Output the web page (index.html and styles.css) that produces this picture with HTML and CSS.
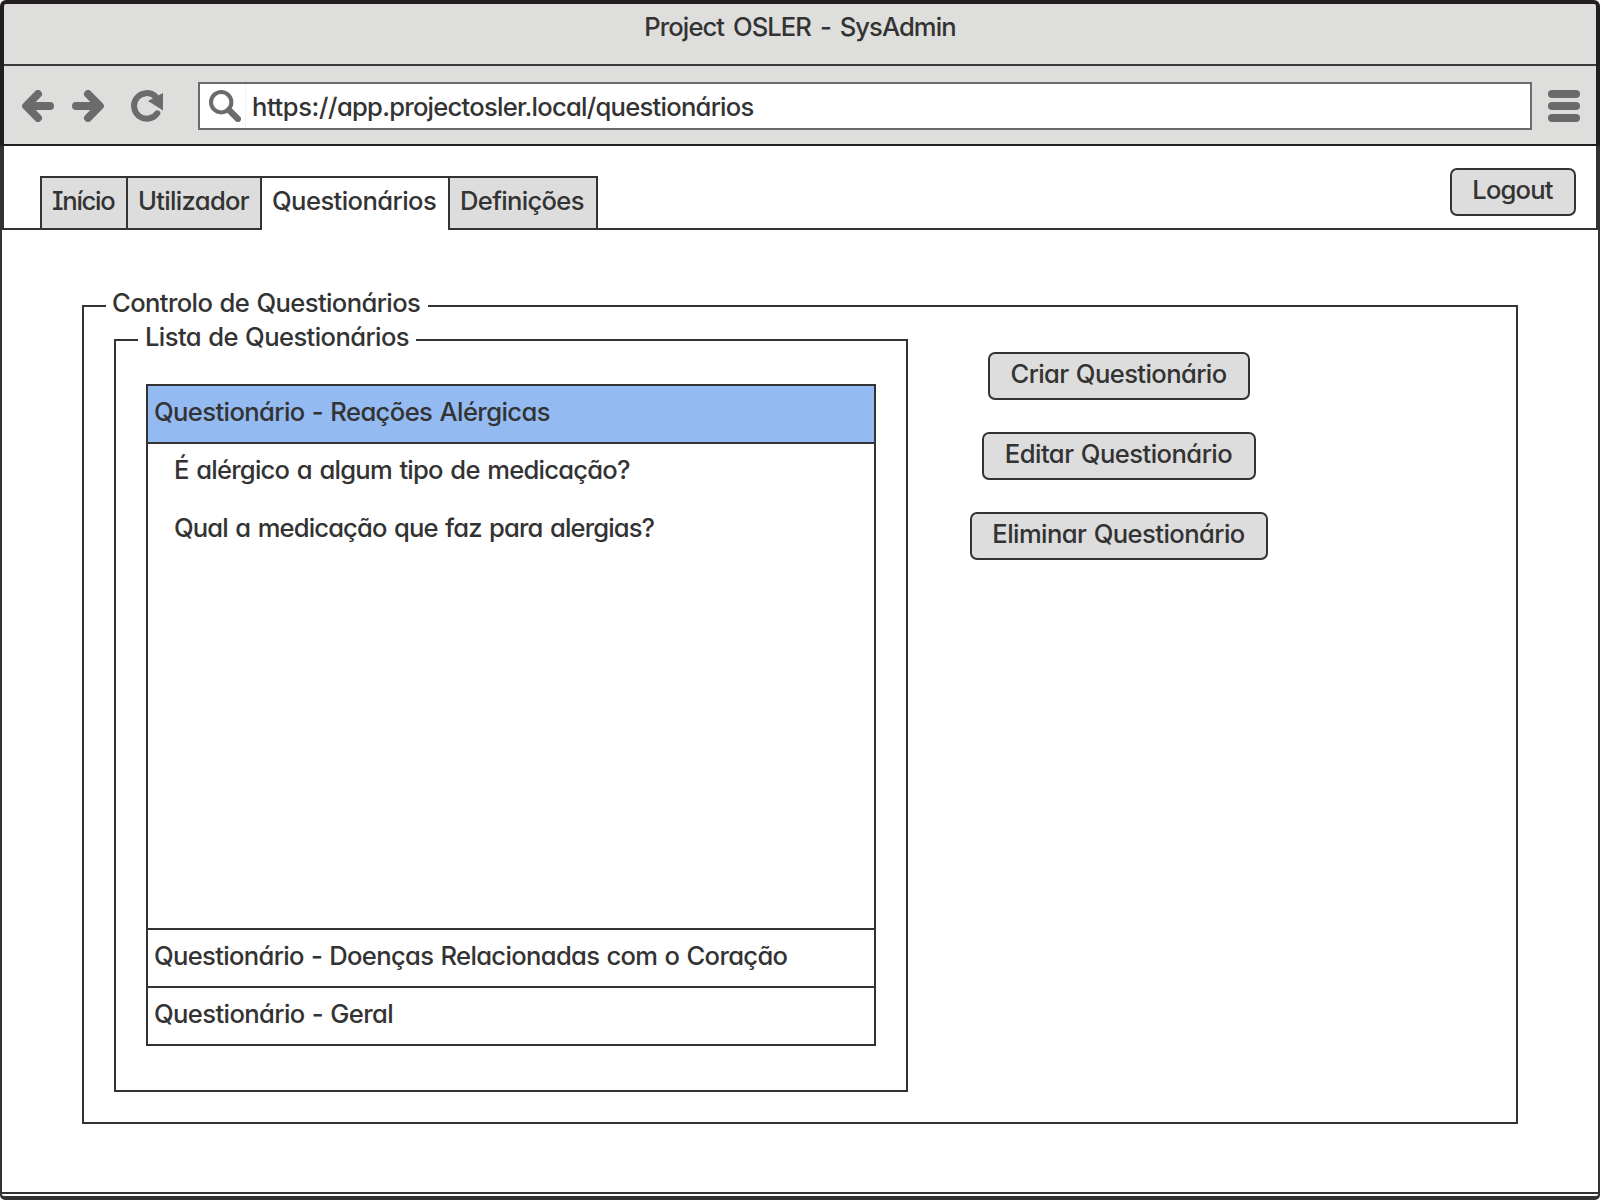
FILE: index.html
```
<!DOCTYPE html>
<html lang="pt">
<head>
<meta charset="utf-8">
<title>Project OSLER - SysAdmin</title>
<link rel="stylesheet" href="styles.css">
</head>
<body>
<div class="window">
  <header class="chrome">
    <div class="titlebar"><span>Project OSLER - SysAdmin</span></div>
    <div class="toolbar">
      <svg class="icon back" width="32" height="32" viewBox="0 0 32 32"><path d="M28 16H5M16 4L4.200 16L16 28" /></svg>
      <svg class="icon forward" width="32" height="32" viewBox="0 0 32 32"><path d="M4 16H27M16 4L27.800 16L16 28" /></svg>
      <svg class="icon reload" width="33" height="32" viewBox="0 0 33 32"><path class="arc" d="M26.300 23.300A12.800 12.800 0 1 1 24.500 6.500" /><path class="head" d="M32 3V20.500L17 11Z" /></svg>
      <div class="address">
        <div class="search"><svg class="icon" width="32" height="32" viewBox="0 0 32 32"><circle class="lens" cx="12.200" cy="12.200" r="10.200" /><path class="handle" d="M20 20L28.900 28.900" /></svg></div>
        <span><span class="scheme">https://</span>app.projectosler.local/questionários</span>
      </div>
      <svg class="menu" width="32" height="32" viewBox="0 0 32 32"><rect width="32" height="8" rx="4" /><rect y="12" width="32" height="8" rx="4" /><rect y="24" width="32" height="8" rx="4" /></svg>
    </div>
  </header>
  <nav class="nav">
    <div class="tabs">
      <a class="tab inicio"><span>Início</span></a>
      <a class="tab utilizador"><span>Utilizador</span></a>
      <a class="tab questionarios active"><span>Questionários</span></a>
      <a class="tab definicoes"><span>Definições</span></a>
    </div>
    <button class="btn logout"><span>Logout</span></button>
  </nav>
  <main class="content">
    <fieldset class="group control">
      <legend><span>Controlo de Questionários</span></legend>
      <div class="columns">
        <fieldset class="group list">
          <legend><span>Lista de Questionários</span></legend>
          <div class="accordion">
            <div class="row selected"><span>Questionário - Reações Alérgicas</span></div>
            <div class="panel">
              <div class="item first"><span>É alérgico a algum tipo de medicação?</span></div>
              <div class="item second"><span>Qual a medicação que faz para alergias?</span></div>
            </div>
            <div class="row heart"><span>Questionário - Doenças Relacionadas com o Coração</span></div>
            <div class="row general"><span>Questionário - Geral</span></div>
          </div>
        </fieldset>
        <div class="actions">
          <button class="btn create"><span>Criar Questionário</span></button>
          <button class="btn edit"><span>Editar Questionário</span></button>
          <button class="btn delete"><span>Eliminar Questionário</span></button>
        </div>
      </div>
    </fieldset>
  </main>
  <footer class="status"></footer>
</div>
</body>
</html>
```
FILE: styles.css
```
* { box-sizing: border-box; }
body {
  margin: 0;
  color: #333;
  background: #fff;
  font: 500 25.6px Inter, sans-serif;
  font-feature-settings: "cv11";
  letter-spacing: -0.6px;
  word-spacing: 1px;
  white-space: nowrap;
}
.window { display: flex; flex-direction: column; width: 1600px; height: 1200px; overflow: hidden; }

/* Browser chrome */
.chrome { height: 146px; background: #dededc; border: 4px solid #231f20; border-bottom-width: 2px; border-radius: 6px 6px 0 0; }
.titlebar { height: 62px; padding-top: 7px; line-height: 32px; text-align: center; letter-spacing: -0.93px; word-spacing: 3px; border-bottom: 2px solid #3c3b3b; }
.toolbar { display: flex; align-items: center; height: 78px; padding: 2px 16px 0 18px; }
.icon { flex: none; fill: none; stroke: #6b6b6b; stroke-width: 8; stroke-linecap: round; stroke-linejoin: round; }
.forward { margin-left: 18px; }
.reload { margin-left: 27px; }
.reload .arc { stroke-width: 6; }
.reload .head { fill: #6b6b6b; stroke: none; }
.icon .lens { stroke-width: 4; }
.icon .handle { stroke-width: 6.4; }
.address { display: flex; width: 1334px; height: 48px; margin-left: 34px; background: #fff; border: 2px solid #6b6b6b; line-height: 45px; letter-spacing: -0.75px; }
.scheme { letter-spacing: -0.43px; }
.search { display: flex; align-items: center; width: 46px; padding-left: 9px; margin-right: 6px; border-right: 1px solid #f3f3f3; }
.menu { margin-left: auto; fill: #6b6b6b; }

/* Tabs */
.nav { display: flex; justify-content: space-between; height: 84px; padding: 22px 20px 0 36px; border: solid #333; border-width: 0 4px 2px; }
.tabs { display: flex; height: 54px; margin-top: 8px; }
.tab { width: 88px; padding-left: 10px; line-height: 45px; background: #ddd; border: 2px solid #333; }
.tab + .tab { border-left: 0; }
.tab.inicio { font-feature-settings: "cv11", "cv08"; letter-spacing: -1.3px; }
.tab.utilizador { width: 134px; letter-spacing: -0.68px; }
.tab.questionarios { width: 188px; letter-spacing: -0.57px; }
.tab.definicoes { width: 148px; letter-spacing: -0.68px; }
.tab.active { background: #fff; border-bottom: 0; }

.btn { height: 48px; padding: 0 1px 6px 0; color: inherit; font: inherit; font-feature-settings: inherit; letter-spacing: -0.6px; word-spacing: inherit; background: #ddd; border: 2px solid #333; border-radius: 7px; }
.logout { width: 126px; letter-spacing: -0.8px; }

/* Questionnaire panels */
.content { flex: 1; padding: 60px 80px 0; border: solid #333; border-width: 0 2px; }
.group { min-width: 0; margin: 0; padding: 0 22px; border: 2px solid #333; }
.group legend { height: 32px; padding: 0 0 0 6px; line-height: 25px; }
.control { height: 834px; }
.control > legend { width: 322px; }
.columns { display: flex; padding: 2px 0 0 8px; }
.list { width: 794px; height: 768px; padding-right: 30px; }
.list > legend { width: 278px; padding-left: 7px; }
.accordion { display: flex; flex-direction: column; height: 662px; margin: 28px 0 0 8px; border: 2px solid #333; }
.row { height: 58px; padding-left: 6px; line-height: 52px; border-top: 2px solid #333; }
.row.selected { height: 56px; background: #94baf2; border: 0; }
.row.heart { letter-spacing: -0.67px; }
.panel { flex: 1; padding-left: 26px; border-top: 2px solid #333; }
.item { height: 58px; line-height: 52px; }
.item.first { letter-spacing: -0.77px; word-spacing: 1.5px; }
.item.second { letter-spacing: -0.87px; word-spacing: 1.5px; }
.actions { display: flex; flex-direction: column; align-items: center; gap: 32px; width: 298px; margin: 28px 0 0 62px; }
.create { width: 262px; }
.edit { width: 274px; letter-spacing: -0.54px; }
.delete { width: 298px; letter-spacing: -0.57px; }

.status { height: 8px; border: solid #333; border-width: 2px 2px 4px; border-radius: 0 0 5px 5px; }
```
